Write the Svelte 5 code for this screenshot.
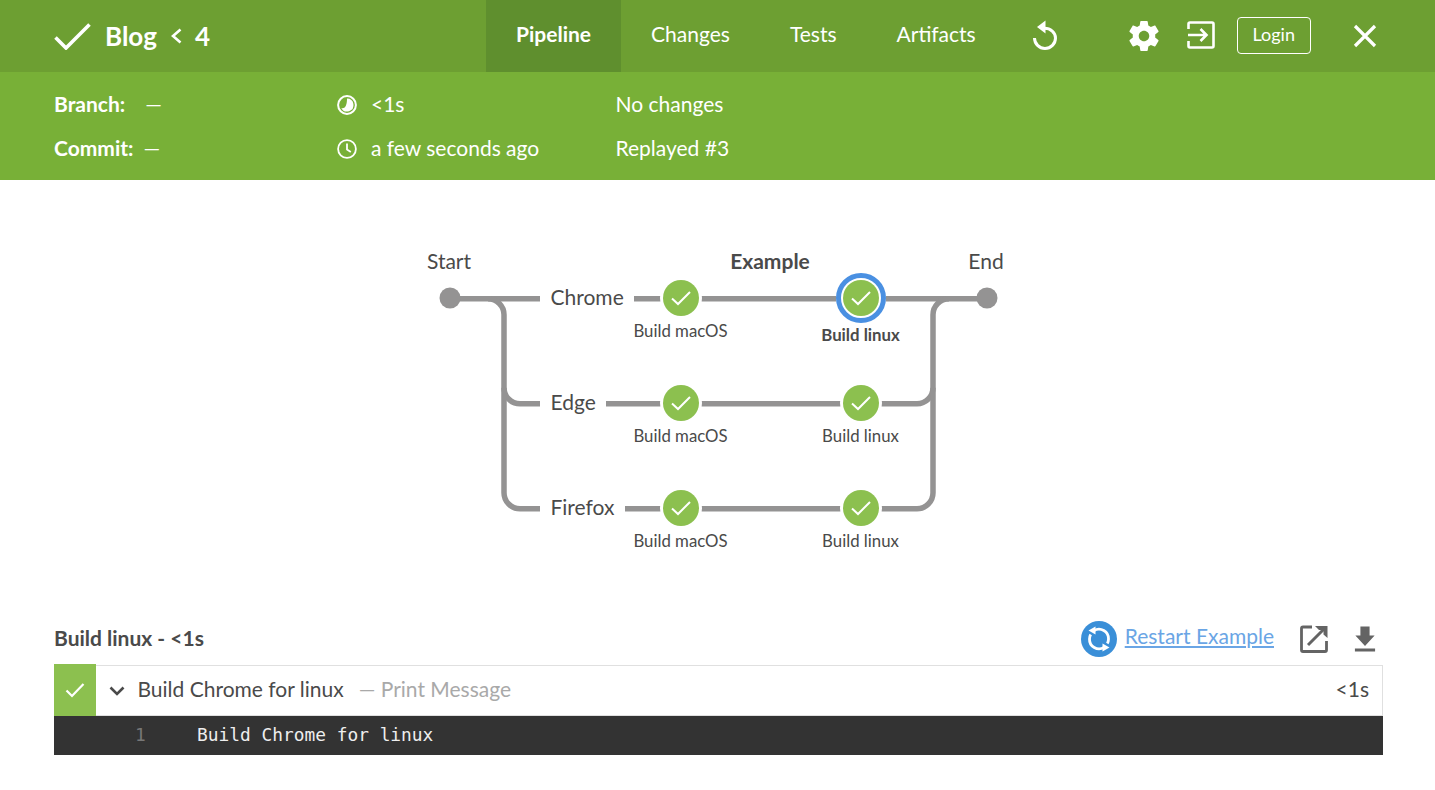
<script>
  const rows = [
    { y: 298, label: 'Chrome' },
    { y: 403, label: 'Edge' },
    { y: 508, label: 'Firefox' }
  ];
  const nodes = [];
  for (const r of rows) {
    nodes.push({ x: 681, y: r.y, name: 'Build macOS', sel: false });
    nodes.push({ x: 861, y: r.y, name: 'Build linux', sel: r.y === 298 });
  }
</script>

<div class="page">
  <header class="top">
    <div class="brand">
      <svg class="tick" viewBox="0 0 37 27" width="37" height="27"><path d="M1.5 14.5 L12 25 L35.5 1.5" fill="none" stroke="#fff" stroke-width="3.6"/></svg>
      <span class="title">Blog</span>
      <svg class="crumb" viewBox="0 0 12 16" width="12" height="16"><path d="M10.5 1.5 L3 8 L10.5 14.5" fill="none" stroke="#fff" stroke-width="2.6"/></svg>
      <span class="title run">4</span>
    </div>
    <nav class="tabs">
      <span class="tab active">Pipeline</span>
      <span class="tab">Changes</span>
      <span class="tab">Tests</span>
      <span class="tab">Artifacts</span>
    </nav>
    <svg class="replay" viewBox="0 0 28 32" width="28" height="32"><path d="M13.5 9.2 C19.5 9.2 24.5 13.5 24.5 19 C24.5 24.8 19.8 29.5 14 29.5 C8.2 29.5 3.5 24.8 3.5 19" fill="none" stroke="#fff" stroke-width="3"/><path d="M14.5 1.5 L14.5 14.5 L6 8 Z" fill="#fff"/></svg>
    <svg class="gear" viewBox="0 0 24 24" width="36" height="36"><path fill="#fff" d="M19.43 12.98c.04-.32.07-.64.07-.98s-.03-.66-.07-.98l2.11-1.65c.19-.15.24-.42.12-.64l-2-3.46c-.12-.22-.39-.3-.61-.22l-2.49 1c-.52-.4-1.08-.73-1.69-.98l-.38-2.65C14.46 2.18 14.25 2 14 2h-4c-.25 0-.46.18-.49.42l-.38 2.65c-.61.25-1.17.59-1.69.98l-2.49-1c-.23-.09-.49 0-.61.22l-2 3.46c-.13.22-.07.49.12.64l2.11 1.65c-.04.32-.07.65-.07.98s.03.66.07.98l-2.11 1.65c-.19.15-.24.42-.12.64l2 3.46c.12.22.39.3.61.22l2.49-1c.52.4 1.08.73 1.69.98l.38 2.65c.03.24.24.42.49.42h4c.25 0 .46-.18.49-.42l.38-2.65c.61-.25 1.17-.59 1.69-.98l2.49 1c.23.09.49 0 .61-.22l2-3.46c.12-.22.07-.49-.12-.64l-2.11-1.65zM12 15.5c-1.93 0-3.5-1.57-3.5-3.5s1.57-3.5 3.5-3.5 3.5 1.57 3.5 3.5-1.57 3.5-3.5 3.5z"/></svg>
    <svg class="exit" viewBox="0 0 28 28" width="28" height="28"><path d="M1.5 8 V3 Q1.5 1.5 3 1.5 H25 Q26.5 1.5 26.5 3 V25 Q26.5 26.5 25 26.5 H3 Q1.5 26.5 1.5 25 V20" fill="none" stroke="#fff" stroke-width="2.6"/><path d="M1 14 H19 M13.5 8 L19.5 14 L13.5 20" fill="none" stroke="#fff" stroke-width="2.6"/></svg>
    <button class="login">Login</button>
    <svg class="close" viewBox="0 0 24 24" width="24" height="24"><path d="M2 2 L22 22 M22 2 L2 22" stroke="#fff" stroke-width="3.2" fill="none"/></svg>
  </header>

  <section class="meta">
    <div class="col first">
      <div class="line"><b>Branch:</b><span class="dash-a">—</span></div>
      <div class="line"><b>Commit:</b><span class="dash-b">—</span></div>
    </div>
    <div class="col second">
      <div class="line">
        <svg viewBox="0 0 20 20" width="20" height="20"><circle cx="10" cy="10" r="8.9" fill="none" stroke="#fff" stroke-width="2"/><path d="M10 3.5 A6.5 6.5 0 1 1 4.2 13 C7.5 14 10 11.5 10 3.5 Z" fill="#fff"/></svg>
        <span>&lt;1s</span>
      </div>
      <div class="line">
        <svg viewBox="0 0 20 20" width="20" height="20"><circle cx="10" cy="10" r="8.9" fill="none" stroke="#fff" stroke-width="1.8"/><path d="M10 4.5 V10.5 L13.8 13" fill="none" stroke="#fff" stroke-width="1.8"/></svg>
        <span>a few seconds ago</span>
      </div>
    </div>
    <div class="col">
      <div class="line"><span>No changes</span></div>
      <div class="line"><span>Replayed #3</span></div>
    </div>
  </section>

  <main class="graph">
    <svg viewBox="417 240 601 320" width="601" height="320">
      <g fill="none" stroke="#949393" stroke-width="5.5" transform="translate(0 0.75)">
        <path d="M450 298 H540" />
        <path d="M488 298 A16 16 0 0 1 504 314 V387 A16 16 0 0 0 520 403 H540" />
        <path d="M504 387 V492 A16 16 0 0 0 520 508 H540" />
        <path d="M634 298 H987" />
        <path d="M606 403 H917 A16 16 0 0 0 933 387" />
        <path d="M625 508 H917 A16 16 0 0 0 933 492 V314 A16 16 0 0 1 949 298" />
      </g>
      <circle cx="450" cy="298" r="10.5" fill="#949393"/>
      <circle cx="987" cy="298" r="10.5" fill="#949393"/>
      <text class="big" x="449" y="269" text-anchor="middle">Start</text>
      <text class="big bold" x="770" y="269" text-anchor="middle">Example</text>
      <text class="big" x="986" y="269" text-anchor="middle">End</text>
      {#each rows as r}
        <text class="big" x="550.5" y={r.y + 7}>{r.label}</text>
      {/each}
      {#each nodes as n}
        {#if n.sel}
          <circle cx={n.x} cy={n.y} r="25" fill="#fff"/>
          <circle cx={n.x} cy={n.y} r="22.5" fill="#fff" stroke="#4a90e2" stroke-width="5"/>
        {:else}
          <circle cx={n.x} cy={n.y} r="21" fill="#fff"/>
        {/if}
        <circle cx={n.x} cy={n.y} r="18" fill="#8cc04f"/>
        <path d="M{n.x - 9} {n.y + 0.5} L{n.x - 3} {n.y + 6} L{n.x + 9} {n.y - 6}" fill="none" stroke="#fff" stroke-width="2"/>
        <text class={n.sel ? 'small bold' : 'small'} x={n.x - 0.5} y={n.y + (n.sel ? 43 : 39)} text-anchor="middle">{n.name}</text>
      {/each}
    </svg>
  </main>

  <section class="log">
    <div class="log-head">
      <strong>Build linux - &lt;1s</strong>
      <div class="actions">
        <svg class="restart" viewBox="0 0 36 36" width="36" height="36">
          <circle cx="18" cy="18" r="18" fill="#3a8fd8"/>
          <path d="M13 9.6 A9.5 9.5 0 0 1 27.5 18 Q27.5 20.5 26.3 22.5 M23 26.4 A9.5 9.5 0 0 1 8.5 18 Q8.5 15.5 9.7 13.5" fill="none" stroke="#fff" stroke-width="2.8"/>
          <path d="M14.5 5.5 V13.5 L7.5 9.5 Z M21.5 30.5 V22.5 L28.5 26.5 Z" fill="#fff"/>
        </svg>
        <a class="restart-link" href="#restart">Restart Example</a>
        <svg class="ext" viewBox="0 0 28 28" width="28" height="28"><path d="M12 2 H3 Q1.5 2 1.5 3.5 V25 Q1.5 26.5 3 26.5 H25 Q26.5 26.5 26.5 25 V16" fill="none" stroke="#646464" stroke-width="2.8"/><path d="M8 20 L24 4" stroke="#646464" stroke-width="3" fill="none"/><path d="M15 1 H27.5 V13 L23.5 9.5 V5 H19 Z" fill="#646464"/></svg>
        <svg class="dl" viewBox="0 0 24 26" width="22" height="26" preserveAspectRatio="none"><path fill="#646464" d="M17 9.5 H22.5 L12 20 L1.5 9.5 H7 V0.5 H17 Z M1 22.5 H23 V25.5 H1 Z"/></svg>
      </div>
    </div>
    <div class="step">
      <div class="status"><svg viewBox="0 0 20 16" width="20" height="16"><path d="M1.5 8.5 L7 14 L18.5 2" fill="none" stroke="#fff" stroke-width="2.2"/></svg></div>
      <svg class="chev" viewBox="0 0 16 10" width="16" height="10"><path d="M1.5 1.5 L8 8 L14.5 1.5" fill="none" stroke="#4a4a4a" stroke-width="2.6"/></svg>
      <span class="step-name">Build Chrome for linux</span>
      <span class="step-sub">— Print Message</span>
      <span class="step-time">&lt;1s</span>
    </div>
    <div class="code">
      <span class="num">1</span>
      <span class="out">Build Chrome for linux</span>
    </div>
  </section>
</div>

<style>
  :global(body) { margin: 0; background: #fff; }
  .page { font-family: Lato, "Liberation Sans", sans-serif; color: #4a4a4a; width: 1435px; }
  svg { display: block; flex: none; }

  .top { height: 72px; background: #6d9f32; display: flex; align-items: center; color: #fff; }
  .brand { display: flex; align-items: center; width: 432px; padding-left: 54px; box-sizing: content-box; }
  .tick { margin-right: 14px; }
  .title { font-size: 26px; font-weight: 700; line-height: 32px; }
  .crumb { margin: 0 13px 0 13px; }
  .tabs { display: flex; height: 72px; }
  .tab { display: flex; align-items: center; padding: 0 30px 5px; font-size: 21px; box-sizing: border-box; }
  .tab.active { font-weight: 700; background: #5f8f2e; }
  .replay { margin: -3px 0 0 25px; }
  .gear { margin-left: 67px; }
  .exit { margin: -2px 0 0 25px; }
  .login { margin: -1px 0 0 22px; width: 74px; height: 37px; background: transparent; border: 1px solid #fff; border-radius: 4px; color: #fff; font: 18px Lato, sans-serif; padding: 0 0 3px; }
  .close { margin-left: 42px; }

  .meta { height: 108px; background: #78b037; color: #fff; display: flex; padding: 10.5px 0 0 54px; box-sizing: border-box; font-size: 21px; }
  .col { display: flex; flex-direction: column; }
  .col.first { width: 283px; }
  .col.second { width: 278.5px; }
  .line { height: 44px; display: flex; align-items: center; line-height: 24px; }
  .line b { font-weight: 700; }
  .line span, .line b { position: relative; top: -1px; }
  .second svg { margin-right: 14px; }
  .dash-a { margin-left: 20px; }
  .dash-b { margin-left: 10px; }

  .graph { display: flex; justify-content: center; padding: 60px 0 0; height: 380px; box-sizing: border-box; }
  .big { font-size: 21px; fill: #4a4a4a; }
  .small { font-size: 16.8px; fill: #4a4a4a; }
  .bold { font-weight: 700; }

  .log { margin: 0 52px 0 54px; }
  .log-head { display: flex; align-items: center; justify-content: space-between; height: 54px; margin-top: 51px; }
  .log-head strong { font-size: 21px; font-weight: 700; margin-bottom: 2px; }
  .actions { display: flex; align-items: center; padding-top: 2px; }
  .restart-link { margin: -7px 0 0 8px; font-size: 21px; color: #6aa5e5; }
  .ext { margin-left: 26px; }
  .dl { margin-left: 26px; margin-right: 7px; }

  .step { height: 51px; display: flex; align-items: center; border: 1px solid #e0e0e0; border-left: 0; box-sizing: border-box; font-size: 21px; }
  .status { width: 42px; height: 52px; margin-top: -1px; background: #8cc04f; display: flex; align-items: center; justify-content: center; }
  .chev { margin-left: 13px; }
  .step-name { margin-left: 12.5px; padding-bottom: 4px; }
  .step-sub { margin-left: 15px; color: #a9a9a9; padding-bottom: 4px; }
  .step-time { margin-left: auto; margin-right: 13px; padding-bottom: 4px; }

  .code { height: 39px; background: #333; display: flex; align-items: center; font-family: "DejaVu Sans Mono", monospace; font-size: 17.85px; padding-bottom: 3px; box-sizing: border-box; }
  .num { margin-left: 81px; width: 62px; color: #777; }
  .out { color: #eee; }
</style>
